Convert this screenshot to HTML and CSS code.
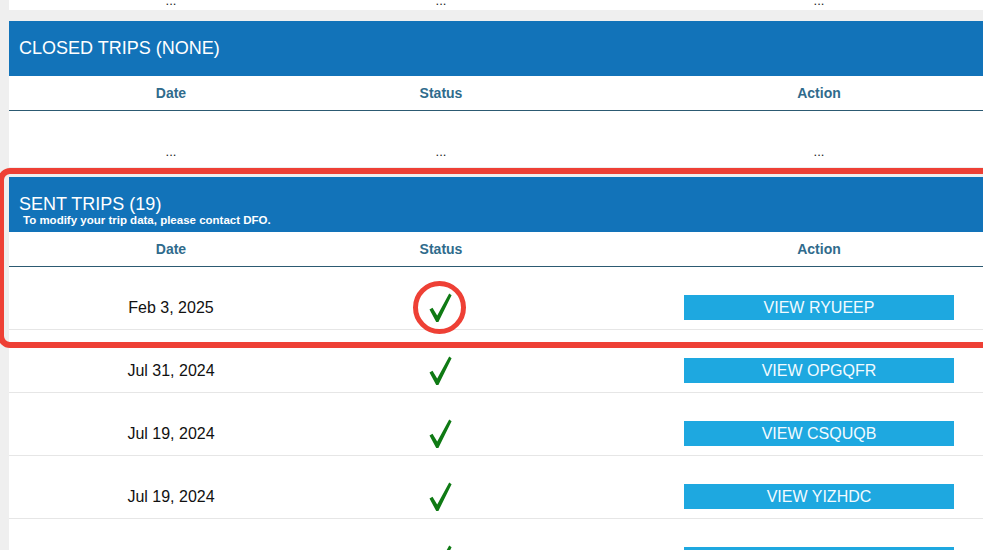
FILE: index.html
```html
<!DOCTYPE html>
<html lang="en">
<head>
    <meta charset="UTF-8">
    <title>Trips</title>
    <meta name="viewport" content="width=device-width, initial-scale=1.0">
    <link rel="stylesheet" href="styles.css">
</head>
<body>
    <div class="page">
        <section class="panel panel-tail">
            <div class="row row-tail">
                <div class="cell">...</div>
                <div class="cell">...</div>
                <div class="cell">...</div>
            </div>
        </section>

        <section class="panel">
            <header class="panel-head">
                <h2>CLOSED TRIPS (NONE)</h2>
            </header>
            <div class="row row-head">
                <div class="cell">Date</div>
                <div class="cell">Status</div>
                <div class="cell">Action</div>
            </div>
            <div class="row row-empty">
                <div class="cell">...</div>
                <div class="cell">...</div>
                <div class="cell">...</div>
            </div>
        </section>

        <section class="panel">
            <header class="panel-head">
                <h2>SENT TRIPS (19)</h2>
                <p>To modify your trip data, please contact DFO.</p>
            </header>
            <div class="row row-head">
                <div class="cell">Date</div>
                <div class="cell">Status</div>
                <div class="cell">Action</div>
            </div>
            <div class="row">
                <div class="cell">Feb 3, 2025</div>
                <div class="cell status">
                    <svg class="check" viewBox="0 0 24 30" width="24" height="30"><path d="M1.5 16.5 L4.5 14.8 L9.2 22.6 L21.2 0.6 L23.6 2.2 L10.4 29 L8.2 29 Z"/></svg>
                    <span class="mark-ring"></span>
                </div>
                <div class="cell"><a class="btn-view" href="#">VIEW RYUEEP</a></div>
            </div>
            <div class="row">
                <div class="cell">Jul 31, 2024</div>
                <div class="cell status">
                    <svg class="check" viewBox="0 0 24 30" width="24" height="30"><path d="M1.5 16.5 L4.5 14.8 L9.2 22.6 L21.2 0.6 L23.6 2.2 L10.4 29 L8.2 29 Z"/></svg>
                </div>
                <div class="cell"><a class="btn-view" href="#">VIEW OPGQFR</a></div>
            </div>
            <div class="row">
                <div class="cell">Jul 19, 2024</div>
                <div class="cell status">
                    <svg class="check" viewBox="0 0 24 30" width="24" height="30"><path d="M1.5 16.5 L4.5 14.8 L9.2 22.6 L21.2 0.6 L23.6 2.2 L10.4 29 L8.2 29 Z"/></svg>
                </div>
                <div class="cell"><a class="btn-view" href="#">VIEW CSQUQB</a></div>
            </div>
            <div class="row">
                <div class="cell">Jul 19, 2024</div>
                <div class="cell status">
                    <svg class="check" viewBox="0 0 24 30" width="24" height="30"><path d="M1.5 16.5 L4.5 14.8 L9.2 22.6 L21.2 0.6 L23.6 2.2 L10.4 29 L8.2 29 Z"/></svg>
                </div>
                <div class="cell"><a class="btn-view" href="#">VIEW YIZHDC</a></div>
            </div>
            <div class="row">
                <div class="cell">Jul 16, 2024</div>
                <div class="cell status">
                    <svg class="check" viewBox="0 0 24 30" width="24" height="30"><path d="M1.5 16.5 L4.5 14.8 L9.2 22.6 L21.2 0.6 L23.6 2.2 L10.4 29 L8.2 29 Z"/></svg>
                </div>
                <div class="cell"><a class="btn-view" href="#">VIEW KDMWTA</a></div>
            </div>
        </section>

        <div class="annotation-box"></div>
    </div>
</body>
</html>
```

FILE: styles.css
```css
html, body {
    margin: 0;
    padding: 0;
    background: #efefef;
    font-family: 'Liberation Sans', Arial, sans-serif;
    overflow: hidden;
}
.page {
    position: relative;
    display: flow-root;
    padding-left: 9px;
    width: 1080px;
}
.panel {
    background: #fff;
    margin-bottom: 10px;
}
.panel-tail {
    margin-top: -40px;
    margin-bottom: 11px;
}
.panel-head {
    background: #1273b9;
    color: #fff;
    height: 55px;
    box-sizing: border-box;
    padding: 17px 10px 0;
}
.panel-head h2 {
    margin: 0;
    font-size: 18px;
    font-weight: normal;
    line-height: 20px;
}
.panel-head p {
    margin: 0;
    padding-left: 4px;
    font-size: 11.5px;
    font-weight: bold;
    line-height: 13px;
}
.row {
    display: grid;
    grid-template-columns: 30% 20% 50%;
    height: 63px;
    box-sizing: border-box;
    padding-top: 28px;
    border-bottom: 1px solid #e6e6e6;
    font-size: 16px;
    color: #111;
}
.cell {
    height: 25px;
    display: flex;
    align-items: center;
    justify-content: center;
}
.row-head {
    height: 35px;
    padding-top: 0;
    align-items: center;
    border-bottom: 1px solid #2c5a72;
    font-size: 14px;
    font-weight: bold;
    color: #2f6b8c;
}
.row-head .cell {
    height: 34px;
}
.row-empty, .row-tail {
    height: 56px;
    border-bottom: none;
    font-size: 13px;
    color: #222;
}
.row-tail {
    height: 50px;
}
.status {
    position: relative;
}
.check {
    fill: #0f7a14;
    margin-left: -2px;
}
.mark-ring {
    position: absolute;
    left: 50%;
    top: 50%;
    width: 53px;
    height: 53px;
    margin: -27px 0 0 -28px;
    box-sizing: border-box;
    border: 5px solid #ee4035;
    border-radius: 50%;
}
.btn-view {
    display: block;
    width: 270px;
    height: 25px;
    line-height: 25px;
    text-align: center;
    background: #1ea8e0;
    color: #f2fbff;
    text-decoration: none;
    font-size: 16px;
}
.annotation-box {
    position: absolute;
    top: 168px;
    left: -2px;
    width: 1000px;
    height: 180px;
    box-sizing: border-box;
    border: 6px solid #ee4035;
    border-radius: 12px;
    pointer-events: none;
}
```
